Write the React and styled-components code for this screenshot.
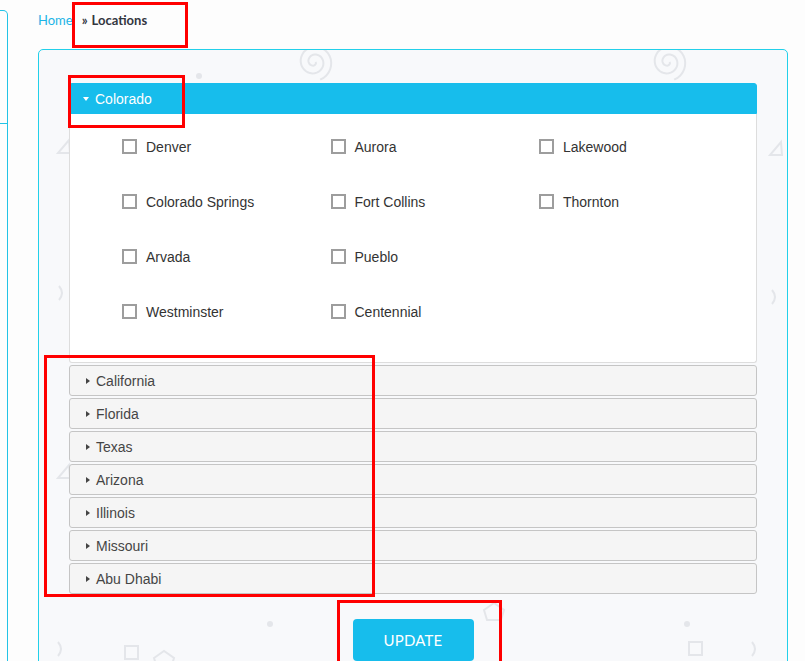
import React, { useState } from "react";
import styled, { createGlobalStyle } from "styled-components";

const GlobalStyle = createGlobalStyle`
  html, body {
    margin: 0;
    padding: 0;
    background: #fdfdfd;
    font-family: "Liberation Sans", Arial, sans-serif;
  }
  #root { overflow: hidden; height: 661px; }
`;

const Page = styled.div`
  position: relative;
  display: flex;
  align-items: flex-start;
  height: 661px;
  overflow: hidden;
`;

const Sidebar = styled.div`
  flex: 0 0 7px;
  margin-top: 10px;
  height: 700px;
  border: 1px solid #22c3e6;
  border-left: none;
  border-top-right-radius: 5px;
  & .divider {
    margin-top: 112px;
    border-top: 1px solid #22c3e6;
  }
`;

const Main = styled.div`
  flex: 0 0 750px;
  margin-left: 30px;
`;

const Crumbs = styled.div`
  font-family: Lato, "Liberation Sans", sans-serif;
  font-size: 13px;
  line-height: 16px;
  padding-top: 12px;
  height: 49px;
  box-sizing: border-box;
  color: #33363f;
  & a {
    color: #1cb4e6;
    text-decoration: none;
  }
  & .sep {
    margin: 0 4px 0 9px;
    font-weight: 700;
  }
  & b { font-weight: 700; }
`;

const Panel = styled.div`
  position: relative;
  border: 1px solid #22d0ea;
  border-radius: 5px;
  background: #f8f9fb;
  padding: 33px 30px 40px 30px;
  min-height: 700px;
`;

const Pattern = styled.svg`
  position: absolute;
  inset: 0;
  width: 100%;
  height: 100%;
  pointer-events: none;
`;

const Accordion = styled.div`
  position: relative;
  display: flex;
  flex-direction: column;
`;

const Header = styled.div`
  display: flex;
  align-items: center;
  height: 31px;
  box-sizing: border-box;
  margin-top: ${(p) => (p.$first ? "0" : "2px")};
  padding-left: ${(p) => (p.$open ? "13px" : "16px")};
  font-size: 14px;
  cursor: pointer;
  border: 1px solid ${(p) => (p.$open ? "#17bdec" : "#c5c5c5")};
  background: ${(p) => (p.$open ? "#17bdec" : "#f5f5f5")};
  color: ${(p) => (p.$open ? "#fff" : "#454545")};
  border-radius: ${(p) => (p.$open ? "3px 3px 0 0" : "3px")};
`;

const Caret = styled.span`
  width: 0;
  height: 0;
  margin-right: 6px;
  ${(p) =>
    p.$open
      ? `border-left: 3.5px solid transparent;
         border-right: 3.5px solid transparent;
         border-top: 4px solid #fff;`
      : `border-top: 3.5px solid transparent;
         border-bottom: 3.5px solid transparent;
         border-left: 4px solid #444;`}
`;

const Body = styled.div`
  background: #fff;
  border: 1px solid #dddddd;
  border-top: none;
  border-radius: 0 0 3px 3px;
  padding: 5px 0 23px 52px;
  display: grid;
  grid-template-columns: repeat(3, 208.5px);
  grid-auto-rows: 55px;
`;

const City = styled.label`
  display: flex;
  align-items: center;
  font-size: 14px;
  color: #333;
  cursor: pointer;
`;

const Box = styled.span`
  width: 15px;
  height: 15px;
  box-sizing: border-box;
  border: 2px solid #9d9d9d;
  background: ${(p) => (p.$on ? "#17bdec" : "#fff")};
  margin-right: 9px;
`;

const Footer = styled.div`
  position: relative;
  display: flex;
  justify-content: center;
  padding-top: 25px;
`;

const Button = styled.button`
  width: 121px;
  height: 42px;
  border: none;
  border-radius: 4px;
  background: #17bdec;
  color: #fff;
  font-family: Lato, "Liberation Sans", sans-serif;
  font-size: 15px;
  letter-spacing: 0.2px;
  cursor: pointer;
`;

const Mark = styled.div`
  position: absolute;
  left: ${(p) => p.$x}px;
  top: ${(p) => p.$y}px;
  width: ${(p) => p.$w}px;
  height: ${(p) => p.$h}px;
  box-sizing: border-box;
  border: 3px solid #ff0000;
  pointer-events: none;
`;

const states = [
  {
    name: "Colorado",
    cities: [
      "Denver", "Aurora", "Lakewood",
      "Colorado Springs", "Fort Collins", "Thornton",
      "Arvada", "Pueblo", null,
      "Westminster", "Centennial", null,
    ],
  },
  { name: "California" },
  { name: "Florida" },
  { name: "Texas" },
  { name: "Arizona" },
  { name: "Illinois" },
  { name: "Missouri" },
  { name: "Abu Dhabi" },
];

const ink = "#e4e6ea";

// archimedean spiral, opening toward the lower right
const spiral = (cx, cy) => {
  const pts = [];
  for (let t = 0; t <= 4.4 * Math.PI; t += 0.2) {
    const r = 1.5 + t * 1.25;
    pts.push(`${(cx + r * Math.cos(t)).toFixed(1)} ${(cy + r * Math.sin(t)).toFixed(1)}`);
  }
  return "M" + pts.join(" L");
};

function Decor() {
  // panel-relative coordinates (panel origin at page 38,49)
  const tri = (x, y) => `M${x + 5} ${y - 7} L${x + 6} ${y + 6} L${x - 6} ${y + 6} Z`;
  return (
    <Pattern>
      <g fill="none" stroke={ink} strokeWidth="2">
        <path d={spiral(275, 12)} />
        <path d={spiral(629, 12)} />
        <path d={tri(25, 97)} />
        <path d={tri(737, 99)} />
        <path d={tri(25, 422)} />
        <path d="M20 236 q6 7 0 14" />
        <path d="M733 240 q6 7 0 14" />
        <path d="M19 592 q6 7 0 14" />
        <path d="M713 592 q6 7 0 14" />
        <rect x="86" y="596" width="13" height="13" />
        <rect x="650" y="592" width="13" height="13" />
        <path d="M115 608 l10 -7 l10 7 l-3 10 h-14 z" />
        <path d="M445 560 l10 -7 l10 7 l-3 10 h-14 z" />
      </g>
      <g fill={ink}>
        <circle cx="160" cy="26" r="3" />
        <circle cx="231" cy="574" r="3" />
        <circle cx="648" cy="574" r="3" />
      </g>
    </Pattern>
  );
}

export default function App() {
  const [open, setOpen] = useState("Colorado");
  const [checked, setChecked] = useState({});
  const toggle = (c) => setChecked((s) => ({ ...s, [c]: !s[c] }));

  return (
    <>
      <GlobalStyle />
      <Page>
        <Sidebar>
          <div className="divider" />
        </Sidebar>
        <Main>
          <Crumbs>
            <a href="#">Home</a>
            <span className="sep">»</span>
            <b>Locations</b>
          </Crumbs>
          <Panel>
            <Decor />
            <Accordion>
              {states.map((s, i) => {
                const isOpen = open === s.name;
                return (
                  <React.Fragment key={s.name}>
                    <Header
                      $open={isOpen}
                      $first={i === 0}
                      onClick={() => setOpen(isOpen ? null : s.name)}
                    >
                      <Caret $open={isOpen} />
                      {s.name}
                    </Header>
                    {isOpen && s.cities && (
                      <Body>
                        {s.cities.map((c, j) =>
                          c ? (
                            <City key={c} onClick={() => toggle(c)}>
                              <Box $on={checked[c]} />
                              {c}
                            </City>
                          ) : (
                            <span key={j} />
                          )
                        )}
                      </Body>
                    )}
                  </React.Fragment>
                );
              })}
            </Accordion>
            <Footer>
              <Button>UPDATE</Button>
            </Footer>
          </Panel>
        </Main>
        <Mark $x={72} $y={2} $w={116} $h={46} />
        <Mark $x={68} $y={75} $w={117} $h={53} />
        <Mark $x={44} $y={355} $w={331} $h={242} />
        <Mark $x={337} $y={600} $w={165} $h={70} />
      </Page>
    </>
  );
}
